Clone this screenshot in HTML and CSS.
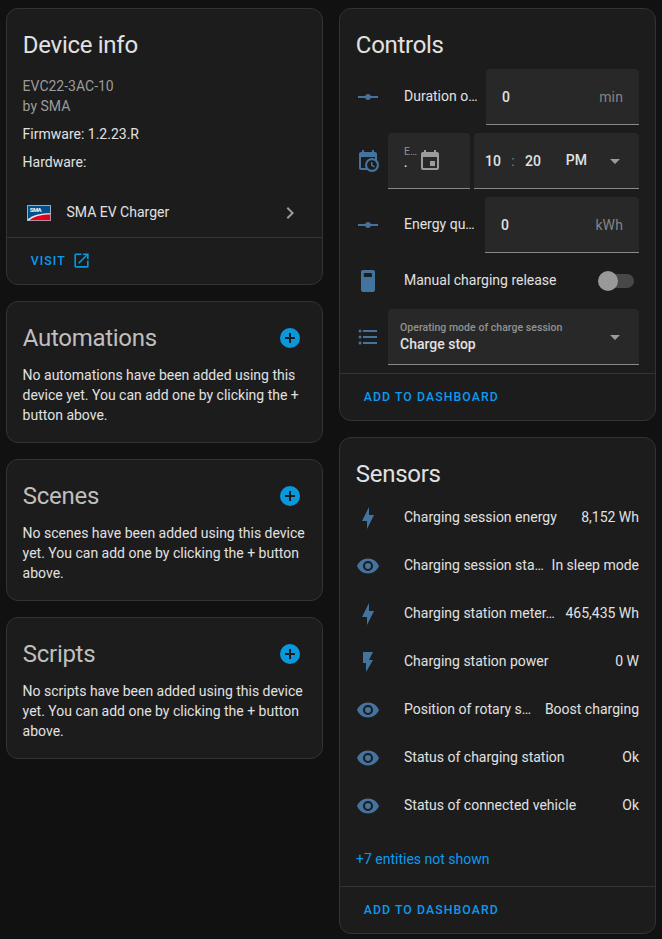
FILE: index.html
```html
<!DOCTYPE html>
<html lang="en">
<head>
<meta charset="utf-8">
<title>SMA EV Charger</title>
<link rel="stylesheet" href="styles.css">
</head>
<body>
<svg class="defs" aria-hidden="true">
  <symbol id="vertex" viewBox="0 0 24 24"><path d="M22,11H14.82C14.4,9.84 13.3,9 12,9C10.7,9 9.6,9.84 9.18,11H2V13H9.18C9.6,14.16 10.7,15 12,15C13.3,15 14.4,14.16 14.82,13H22V11Z"/></symbol>
  <symbol id="calclock" viewBox="0 0 24 24"><path d="M15,13H16.5V15.82L18.94,17.23L18.19,18.53L15,16.69V13M19,8H5V19H9.67C9.24,18.09 9,17.07 9,16A7,7 0 0,1 16,9C17.07,9 18.09,9.24 19,9.67V8M5,21C3.89,21 3,20.1 3,19V5C3,3.89 3.89,3 5,3H6V1H8V3H16V1H18V3H19A2,2 0 0,1 21,5V11.1C22.24,12.36 23,14.09 23,16A7,7 0 0,1 16,23C14.09,23 12.36,22.24 11.1,21H5M16,11.15A4.85,4.85 0 0,0 11.15,16C11.15,18.68 13.32,20.85 16,20.85A4.85,4.85 0 0,0 20.85,16C20.85,13.32 18.68,11.15 16,11.15Z"/></symbol>
  <symbol id="calendar" viewBox="0 0 24 24"><path d="M19,19H5V8H19M16,1V3H8V1H6V3H5C3.89,3 3,3.89 3,5V19A2,2 0 0,0 5,21H19A2,2 0 0,0 21,19V5C21,3.89 20.1,3 19,3H18V1M17,12H12V17H17V12Z"/></symbol>
  <symbol id="list" viewBox="0 0 24 24"><path d="M7,5H21V7H7V5M7,13V11H21V13H7M4,4.5A1.5,1.5 0 0,1 5.5,6A1.5,1.5 0 0,1 4,7.5A1.5,1.5 0 0,1 2.5,6A1.5,1.5 0 0,1 4,4.5M4,10.5A1.5,1.5 0 0,1 5.5,12A1.5,1.5 0 0,1 4,13.5A1.5,1.5 0 0,1 2.5,12A1.5,1.5 0 0,1 4,10.5M7,19V17H21V19H7M4,16.5A1.5,1.5 0 0,1 5.5,18A1.5,1.5 0 0,1 4,19.5A1.5,1.5 0 0,1 2.5,18A1.5,1.5 0 0,1 4,16.5Z"/></symbol>
  <symbol id="release" viewBox="0 0 24 24"><path fill-rule="evenodd" d="M7,1H17A2,2 0 0,1 19,3V21A2,2 0 0,1 17,23H7A2,2 0 0,1 5,21V3A2,2 0 0,1 7,1M8.8,4A1,1 0 0,0 7.8,5V8H16V5A1,1 0 0,0 15,4Z"/></symbol>
  <symbol id="bolt" viewBox="0 0 24 24"><path d="M11 15H6L13 1V9H18L11 23V15Z"/></symbol>
  <symbol id="flash" viewBox="0 0 24 24"><path d="M7,2V13H10V22L17,10H13L17,2H7Z"/></symbol>
  <symbol id="eye" viewBox="0 0 24 24"><path d="M12,9A3,3 0 0,0 9,12A3,3 0 0,0 12,15A3,3 0 0,0 15,12A3,3 0 0,0 12,9M12,17A5,5 0 0,1 7,12A5,5 0 0,1 12,7A5,5 0 0,1 17,12A5,5 0 0,1 12,17M12,4.5C7,4.5 2.73,7.61 1,12C2.73,16.39 7,19.5 12,19.5C17,19.5 21.27,16.39 23,12C21.27,7.61 17,4.5 12,4.5Z"/></symbol>
  <symbol id="plus" viewBox="0 0 24 24"><path d="M17,13H13V17H11V13H7V11H11V7H13V11H17M12,2A10,10 0 0,0 2,12A10,10 0 0,0 12,22A10,10 0 0,0 22,12A10,10 0 0,0 12,2Z"/></symbol>
  <symbol id="open" viewBox="0 0 24 24"><path d="M14,3V5H17.59L7.76,14.83L9.17,16.24L19,6.41V10H21V3M19,19H5V5H12V3H5C3.89,3 3,3.9 3,5V19A2,2 0 0,0 5,21H19A2,2 0 0,0 21,19V12H19V19Z"/></symbol>
  <symbol id="chevron" viewBox="0 0 24 24"><path d="M8.59,16.58L13.17,12L8.59,7.41L10,6L16,12L10,18L8.59,16.58Z"/></symbol>
  <symbol id="caret" viewBox="0 0 10 5"><path d="M0,0H10L5,5Z"/></symbol>
</svg>
<main class="columns">
  <div class="column">
    <section class="card">
      <h1>Device info</h1>
      <div class="device">
        <p class="muted">EVC22-3AC-10<br>by SMA</p>
        <p>Firmware: 1.2.23.R</p>
        <p>Hardware:</p>
      </div>
      <a class="integration">
        <svg class="logo" viewBox="0 0 24 16">
          <rect width="24" height="16" rx="1" fill="#d5d9dc"/>
          <rect x=".7" y=".7" width="22.6" height="14.6" fill="#00508c"/>
          <path d="M.7,15.3V14.3C7,9.6 14,8.3 23.3,8.3V15.3Z" fill="#e9eaec"/>
          <path d="M2.2,15.3C8,11 15,9.6 23.3,9.5V15.3Z" fill="#e2001a"/>
          <text class="logo-text" x="2.7" y="7.1" textLength="12">SMA</text>
        </svg>
        <span>SMA EV Charger</span>
        <svg class="icon chevron"><use href="#chevron"/></svg>
      </a>
      <footer><a class="action">Visit<svg class="open"><use href="#open"/></svg></a></footer>
    </section>
    <section class="card related">
      <header><h1>Automations</h1><svg class="icon plus"><use href="#plus"/></svg></header>
      <p>No automations have been added using this device yet. You can add one by clicking the + button above.</p>
    </section>
    <section class="card related">
      <header><h1>Scenes</h1><svg class="icon plus"><use href="#plus"/></svg></header>
      <p>No scenes have been added using this device yet. You can add one by clicking the + button above.</p>
    </section>
    <section class="card related">
      <header><h1>Scripts</h1><svg class="icon plus"><use href="#plus"/></svg></header>
      <p>No scripts have been added using this device yet. You can add one by clicking the + button above.</p>
    </section>
  </div>
  <div class="column">
    <section class="card">
      <h1>Controls</h1>
      <div class="rows controls">
        <div class="row"><svg class="icon"><use href="#vertex"/></svg><span class="name">Duration o…</span>
          <div class="field number duration"><span>0</span><span class="unit">min</span></div></div>
        <div class="row"><svg class="icon"><use href="#calclock"/></svg>
          <div class="field date"><div class="date-text"><span class="label">E…</span><span class="date-value">.</span></div><svg class="icon calendar"><use href="#calendar"/></svg></div>
          <div class="field time"><span>10</span><span class="colon">:</span><span>20</span><span class="period">PM</span><svg class="caret"><use href="#caret"/></svg></div></div>
        <div class="row"><svg class="icon"><use href="#vertex"/></svg><span class="name">Energy qu…</span>
          <div class="field number energy"><span>0</span><span class="unit">kWh</span></div></div>
        <div class="row"><svg class="icon"><use href="#release"/></svg><span class="name">Manual charging release</span><span class="switch"></span></div>
        <div class="row"><svg class="icon"><use href="#list"/></svg>
          <div class="field select"><div class="select-text"><span class="label">Operating mode of charge session</span><span>Charge stop</span></div><svg class="caret"><use href="#caret"/></svg></div></div>
      </div>
      <footer><a class="action">Add to dashboard</a></footer>
    </section>
    <section class="card">
      <h1>Sensors</h1>
      <div class="rows sensors">
        <div class="row"><svg class="icon"><use href="#bolt"/></svg><span class="name">Charging session energy</span><span class="state">8,152 Wh</span></div>
        <div class="row"><svg class="icon"><use href="#eye"/></svg><span class="name">Charging session sta…</span><span class="state">In sleep mode</span></div>
        <div class="row"><svg class="icon"><use href="#bolt"/></svg><span class="name">Charging station meter…</span><span class="state">465,435 Wh</span></div>
        <div class="row"><svg class="icon"><use href="#flash"/></svg><span class="name">Charging station power</span><span class="state">0 W</span></div>
        <div class="row"><svg class="icon"><use href="#eye"/></svg><span class="name">Position of rotary s…</span><span class="state">Boost charging</span></div>
        <div class="row"><svg class="icon"><use href="#eye"/></svg><span class="name">Status of charging station</span><span class="state">Ok</span></div>
        <div class="row"><svg class="icon"><use href="#eye"/></svg><span class="name">Status of connected vehicle</span><span class="state">Ok</span></div>
      </div>
      <a class="more">+7 entities not shown</a>
      <footer><a class="action">Add to dashboard</a></footer>
    </section>
  </div>
</main>
</body>
</html>
```
FILE: styles.css
```css
* { box-sizing: border-box; }
body {
  margin: 0;
  background: #111111;
  color: #e1e1e1;
  font: 14px/20px Roboto, sans-serif;
}
p, h1 { margin: 0; }
svg { display: block; fill: currentColor; flex: none; }
.defs { display: none; }
.columns { display: flex; gap: 16px; padding: 8px 6px 5px; }
.column { flex: none; width: 317px; display: flex; flex-direction: column; gap: 16px; }
.card { background: #1c1c1c; border: 1px solid #333333; border-radius: 12px; }
.card h1 {
  padding: 12px 15.8px 0;
  font-size: 24px;
  font-weight: 400;
  line-height: 48px;
  letter-spacing: -0.012em;
}
.icon { width: 24px; height: 24px; }

.device { display: flex; flex-direction: column; gap: 8px; padding: 7px 15.6px 0; }
.muted { color: #9b9b9b; }
.integration { display: flex; align-items: center; height: 48px; margin-top: 17px; padding: 0 20px; }
.integration span { flex: 1; margin: 0 0 2px 15.5px; }
.logo { width: 24px; height: 16px; }
.logo-text { font: 900 6px Roboto, sans-serif; fill: #dfe9f1; }
.chevron { color: #9b9b9b; }
footer { display: flex; align-items: center; height: 47px; border-top: 1px solid #333333; padding-left: 23.7px; }
.action {
  display: flex;
  align-items: center;
  color: #0a9bf0;
  font-size: 12.25px;
  font-weight: 500;
  letter-spacing: 1.09px;
  text-transform: uppercase;
}
.open { width: 19px; height: 19px; margin-left: 6.5px; margin-bottom: 1px; color: #0a98dc; }

.related header { display: flex; justify-content: space-between; color: #bfbfbf; }
.plus { margin: 24px 20px 0 0; color: #0a98dc; }
.related p { padding: 3px 15.6px 17px; }

.rows { display: flex; flex-direction: column; gap: 8px; padding: 0 16px; }
.row { display: flex; align-items: center; min-height: 40px; }
.row > .icon { color: #44739e; }
.name { flex: 1; min-width: 0; margin: 0 0 2px 24px; white-space: nowrap; }
.state { flex: none; margin: 0 0 2px 7px; white-space: nowrap; }
.controls { padding-bottom: 8px; }
.field {
  display: flex;
  align-items: center;
  height: 56px;
  background: #282828;
  border-bottom: 1px solid #888888;
  border-radius: 4px 4px 0 0;
  font-weight: 500;
}
.number { flex: none; justify-content: space-between; margin-left: 8px; padding: 0 16px; }
.duration { width: 153px; }
.energy { width: 154px; }
.unit { color: #848484; font-weight: 400; letter-spacing: .13px; }
.label { color: #929292; font-size: 10.5px; line-height: 15px; letter-spacing: .04px; }
.date { width: 82px; margin-left: 8px; padding-left: 16px; }
.date-text { display: flex; flex-direction: column; width: 14px; height: 34px; }
.date-text .label { white-space: nowrap; font-weight: 400; }
.date-value { font-size: 12px; line-height: 8px; }
.calendar { color: #9b9b9b; }
.time { width: 165px; margin-left: 4px; padding: 0 19px 0 11px; }
.colon { width: 24px; text-align: center; color: #848484; font-weight: 400; }
.period { flex: 1; margin: 0 0 2px 25px; }
.caret { width: 10px; height: 5px; margin-top: 2px; color: #9b9b9b; }
.select { flex: 1; justify-content: space-between; margin-left: 8px; padding: 0 19px 0 12px; }
.select-text { display: flex; flex-direction: column; line-height: 18px; }
.switch {
  display: flex;
  align-items: center;
  width: 32px;
  height: 14px;
  margin-right: 5px;
  border-radius: 7px;
  background: #484848;
}
.switch::before { content: ""; width: 20px; height: 20px; margin-left: -4px; flex: none; border-radius: 50%; background: #999999; }
.more { display: block; padding: 23px 16px 17px; color: #0a9bf0; }
```
